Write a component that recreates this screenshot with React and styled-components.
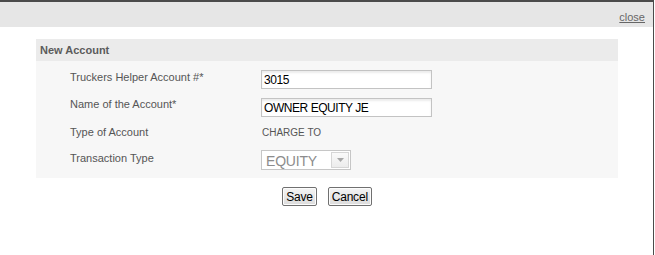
import React from 'react';
import styled, {createGlobalStyle} from 'styled-components';

const GlobalStyle = createGlobalStyle`
    body {
        margin: 0;
        background: #fff;
        font-family: "Liberation Sans", Arial, sans-serif;
    }
`;

const Window = styled.div`
    box-sizing: border-box;
    width: 654px;
    height: 255px;
    border-top: 2px solid #4b4b4b;
    border-right: 1px solid #4b4b4b;
    background: #fff;
`;

const TitleBar = styled.div`
    height: 25px;
    background: #e6e6e6;
    display: flex;
    justify-content: flex-end;
    align-items: center;
    padding: 0 8px 0 0;
`;

const CloseLink = styled.a`
    font-size: 11px;
    color: #666;
    text-decoration: underline;
    margin-top: 4px;
    cursor: pointer;
`;

const Body = styled.div`
    padding: 12px 0 0 36px;
`;

const Panel = styled.div`
    width: 582px;
    background: #f7f7f7;
`;

const PanelHeader = styled.div`
    height: 22px;
    line-height: 22px;
    background: #ebebeb;
    padding-left: 4px;
    font-size: 11px;
    font-weight: bold;
    color: #5b5b5b;
`;

const Fields = styled.div`
    display: grid;
    grid-template-columns: 191px 1fr;
    grid-template-rows: 27px 28px 26px 27px;
    padding: 5px 0 4px 34px;
`;

const Label = styled.div`
    font-size: 11px;
    color: #555;
    padding-top: 5px;
`;

const Value = styled.div`
    display: flex;
    align-items: ${props => props.small ? 'flex-start' : 'center'};
    font-size: ${props => props.small ? '10px' : '12px'};
    color: #555;
    ${props => props.small && 'padding-top: 6px; padding-left: 1px;'}
`;

const TextInput = styled.input`
    box-sizing: border-box;
    width: 171px;
    height: 19px;
    margin: 0;
    padding: 1px 2px 0;
    border: 1px solid #c3c3c3;
    box-shadow: inset 0 2px 2px rgba(0, 0, 0, 0.08);
    background: #fff;
    font-family: "Liberation Sans", Arial, sans-serif;
    font-size: 12px;
    letter-spacing: -0.45px;
    color: #000;
    outline: none;
`;

const Select = styled.div`
    box-sizing: border-box;
    width: 90px;
    height: 20px;
    margin-top: -2px;
    display: flex;
    border: 1px solid #c6c6c6;
    background: #fff;
`;

const SelectText = styled.div`
    flex: 1;
    padding: 1px 0 0 4px;
    font-size: 14px;
    line-height: 18px;
    letter-spacing: -0.2px;
    color: #8c8c8c;
`;

const SelectArrow = styled.div`
    width: 16px;
    margin: 1px;
    border: 1px solid #d6d6d6;
    background: linear-gradient(#fafafa, #ececec);
    display: flex;
    align-items: center;
    justify-content: center;
`;

const Buttons = styled.div`
    width: 582px;
    display: flex;
    justify-content: center;
    gap: 11px;
    padding-top: 9px;
`;

const Button = styled.button`
    box-sizing: border-box;
    height: 19px;
    margin: 0;
    padding: 0 3px;
    border: 1px solid #707070;
    border-radius: 2px;
    background: linear-gradient(#f4f4f4, #dcdcdc);
    box-shadow: inset 0 0 0 1px #fcfcfc;
    font-family: "Liberation Sans", Arial, sans-serif;
    font-size: 12px;
    letter-spacing: -0.2px;
    color: #000;
`;

const fields = [
    {label: 'Truckers Helper Account #*', input: '3015'},
    {label: 'Name of the Account*', input: 'OWNER EQUITY JE'},
    {label: 'Type of Account', text: 'CHARGE TO'},
    {label: 'Transaction Type', select: 'EQUITY'},
];

export default function App() {
    return (
        <Window>
            <GlobalStyle/>
            <TitleBar>
                <CloseLink>close</CloseLink>
            </TitleBar>
            <Body>
                <Panel>
                    <PanelHeader>New Account</PanelHeader>
                    <Fields>
                        {fields.map(field => (
                            <React.Fragment key={field.label}>
                                <Label>{field.label}</Label>
                                <Value small={!!field.text}>
                                    {field.input && <TextInput defaultValue={field.input}/>}
                                    {field.text}
                                    {field.select && (
                                        <Select>
                                            <SelectText>{field.select}</SelectText>
                                            <SelectArrow>
                                                <svg width="7" height="4" viewBox="0 0 7 4">
                                                    <path d="M0 0 L7 0 L3.5 4 Z" fill="#a8a8a8"/>
                                                </svg>
                                            </SelectArrow>
                                        </Select>
                                    )}
                                </Value>
                            </React.Fragment>
                        ))}
                    </Fields>
                </Panel>
                <Buttons>
                    <Button>Save</Button>
                    <Button>Cancel</Button>
                </Buttons>
            </Body>
        </Window>
    );
}
